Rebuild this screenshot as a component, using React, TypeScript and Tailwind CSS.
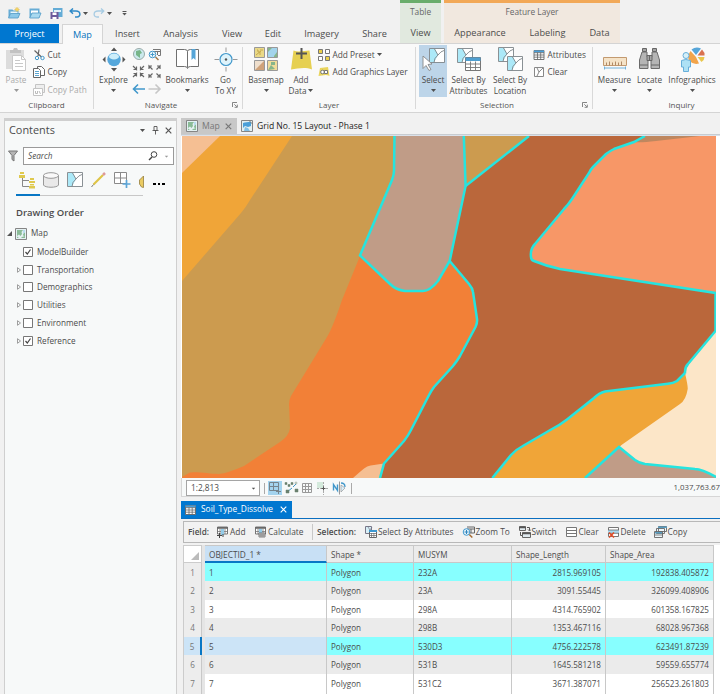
import type { ReactNode } from "react";

function Svg({ w, h, children, className = "" }: { w: number; h: number; children: ReactNode; className?: string }) {
  return (
    <svg width={w} height={h} viewBox={`0 0 ${w} ${h}`} fill="none" className={`block shrink-0 ${className}`}>
      {children}
    </svg>
  );
}

function Caret({ className = "text-[#505050]" }: { className?: string }) {
  return (
    <Svg w={5} h={3} className={className}>
      <path d="M0 0h5L2.500 3z" fill="currentColor" />
    </Svg>
  );
}

function Launcher() {
  return (
    <Svg w={6} h={6}>
      <path d="M.5 5V.5H5M2.3 2.3l2.5 2.5M5.3 2.6v2.7H2.6" stroke="#777" strokeWidth=".9" />
    </Svg>
  );
}

function MapIcon({ blue = false }: { blue?: boolean }) {
  return (
    <Svg w={12} h={12}>
      <path d="M.5.5h11v11H.5z" fill="#e4f1f2" stroke="#858585" />
      {blue ? (
        <>
          <path d="M2 3c2-1 5-1 8-1v4L7 7 4 6 2 8z" fill="#4a9fd8" />
          <path d="M3 11l1-4 3 1 2 3z" fill="#80bfe5" />
          <path d="M8 .5l3.500 3.500" stroke="#777" />
        </>
      ) : (
        <>
          <path d="M2 2h6L6.500 4 7 6 5.500 8 4 6.500 2 8z" fill="#8abb97" />
          <path d="M2 8.500l2 1.500H2zM8 6l2-2v4L8.500 8zM7 9l3-1v2H6z" fill="#8abb97" />
          <path d="M8 2h2v2L8 6z" fill="#b9dcf0" />
        </>
      )}
    </Svg>
  );
}

function Grid({ w = 11, h = 10 }: { w?: number; h?: number }) {
  return (
    <svg width={w} height={h} viewBox="0 0 11 10" fill="none" className="block shrink-0">
      <path d="M.5.5h10v9H.5z" fill="#fff" stroke="#666" strokeWidth=".9" />
      <path d="M.5.5h10v2H.5z" fill="#4a9fd8" />
      <path d="M.5 2.700h10M.5 5h10M.5 7.200h10M4 2.500v7M7.200 2.500v7" stroke="#666" strokeWidth=".8" />
    </svg>
  );
}

function Tool({ kind }: { kind: string }) {
  return (
    <Svg w={13} h={12}>
      {kind === "add" || kind === "calc" ? (
        <>
          <path d="M1.500 1h10v7h-10z" fill="#fff" stroke="#666" strokeWidth=".9" />
          <path d="M1 1h11v1.800H1z" fill="#696969" />
          <path d="M4 3v5M9 3v5M1.500 5.500h10" stroke="#777" strokeWidth=".8" />
          <path d="M5 3h3v6H5z" fill="#94cce9" />
          {kind === "add" ? <path d="M1 9.500h5M3.500 7v5M7 8v3" stroke="#444" /> : <path d="M5 7h6v4H5zM7 7v4M9 7v4M5 9h6" fill="#fff" stroke="#555" strokeWidth=".7" />}
        </>
      ) : kind === "select" ? (
        <>
          <path d="M1.500 .5h6v7h-6z" fill="#d7eff7" stroke="#778" />
          <path d="M4 1l2 3 2-3" stroke="#778" strokeWidth=".7" />
          <path d="M5.500 4.500h7v7h-7z" fill="#fff" stroke="#666" />
          <path d="M5 4h8v2H5z" fill="#3d98d0" />
          <path d="M5 7.500h7M5 9.500h7M7.500 7v4M9.900 7v4" stroke="#666" strokeWidth=".7" />
        </>
      ) : kind === "zoom" ? (
        <>
          <path d="M5 1h7.500v6H8M5 3h7M9 3v4" stroke="#666" />
          <circle cx="4.500" cy="6" r="3.300" fill="#e7f5fb" stroke="#4299cf" />
          <path d="M2.500 6h4M4.500 4v4" stroke="#3185bd" />
          <path d="M7.300 8.500l3 3" stroke="#a66a31" strokeWidth="1.400" />
        </>
      ) : kind === "switch" ? (
        <>
          <path d="M1.500 .5h6v4h-6zM4.500 6.500h8v5h-8z" fill="#e0eaef" stroke="#666" />
          <path d="M1 1.500h7M4 7.500h9" stroke="#555" strokeWidth="1.500" />
          <path d="M9 1.500h2.500v3M10 3.500l1.500 1.500L13 3.500M2.500 6v3.500H4" stroke="#555" />
        </>
      ) : kind === "clear" ? (
        <path d="M1.500 1.500h10v9h-10zM1 4.500h10M1 7.500h10" fill="#fff" stroke="#777" />
      ) : kind === "delete" ? (
        <>
          <path d="M1.500 1.500h10v9h-10z" fill="#fff" stroke="#777" />
          <path d="M1 4h11v3H1z" fill="#a9d8ee" />
          <path d="M1 4h11M1 7.300h11" stroke="#666" strokeWidth=".8" />
          <path d="M2 6.500l5 5M7 6.500l-5 5" stroke="#e04b26" strokeWidth="1.500" />
        </>
      ) : (
        <>
          <path d="M4.500 .5h8v5h-8zM2.500 2.500h8v5h-8zM.5 5.500h8v6h-8z" fill="#eef7fb" stroke="#666" strokeWidth=".9" />
          <path d="M1 6h7v1.500H1zM4 .5h9V2H4z" fill="#5a9dc0" />
          <path d="M1 9h8" stroke="#666" strokeWidth=".8" />
        </>
      )}
    </Svg>
  );
}

function Big({ icon, a, b, caret, width, on, off }: { icon: ReactNode; a: string; b?: string; caret?: boolean; width: string; on?: boolean; off?: boolean }) {
  return (
    <div className={`flex h-[52px] shrink-0 flex-col items-center pt-[1px] whitespace-nowrap ${width} ${on ? "bg-[#bdd5e9]" : ""} ${off ? "text-[#a9a9a9]" : ""}`}>
      <div className="flex h-[26px] items-center justify-center">{icon}</div>
      <div className="mt-[2px] h-[11px] text-[8.2px] leading-[11px]">{a}</div>
      <div className="flex h-[11px] items-center justify-center gap-[2px] text-[8.2px] leading-[11px]">
        {b}
        {caret && <Caret className={off ? "text-[#999]" : "text-[#505050]"} />}
      </div>
    </div>
  );
}

function Group({ title, width, launcher, children }: { title: string; width: string; launcher?: boolean; children: ReactNode }) {
  return (
    <div className={`flex h-[68px] shrink-0 flex-col pt-[1px] ${width}`}>
      <div className="flex h-[54px]">{children}</div>
      <div className="flex h-[12px] items-center text-[8px] leading-[12px] text-[#555]">
        <span className="flex-1 text-center">{title}</span>
        {launcher && <span className="mr-[4px] ml-[4px]"><Launcher /></span>}
      </div>
    </div>
  );
}

function Small({ icon, children, off, caret }: { icon: ReactNode; children: ReactNode; off?: boolean; caret?: boolean }) {
  return (
    <div className={`flex h-[17.500px] items-center gap-[2.500px] text-[8.300px] whitespace-nowrap ${off ? "text-[#a9a9a9]" : ""}`}>
      <span className="flex w-[13px] justify-center">{icon}</span>
      <span>{children}</span>
      {caret && <Caret />}
    </div>
  );
}

const Divider = () => <div className="mt-[3px] h-[62px] w-px shrink-0 bg-[#d9d9d9]" />;

function QuickAccess() {
  return (
    <div className="flex h-[24px] items-center pt-[2px] pl-[8px]">
      <Svg w={13} h={12}>
        <path d="M.5 2.500h4l1 1h5v7H.5z" fill="#67acd5" /><path d="M2.500 4.500h7v3h-7z" fill="#e9f6fb" /><path d="M2.500 6.500h9.500l-2 4.500H.5z" fill="#8cc8e8" stroke="#529bc7" strokeWidth=".8" />
        <path d="M9 0v5M6.500 2.500h5M7.200.700l3.600 3.600M10.800.700L7.200 4.300" stroke="#d9b64a" strokeWidth=".8" /><circle cx="9" cy="2.500" r="1.400" fill="#f4d463" />
      </Svg>
      <Svg w={13} h={12} className="ml-[8px]">
        <path d="M.5 1.500h10v9H.5z" fill="#67acd5" /><path d="M2 3.500h7v3H2z" fill="#fff" /><path d="M3 6h9l-2 5H.7z" fill="#a9d9f0" stroke="#529bc7" strokeWidth=".8" />
      </Svg>
      <Svg w={13} h={13} className="ml-[8px]">
        <path d="M3 1h9.500v9H3z" fill="#64acd6" /><path d="M4 3h7v2H4z" fill="#e2f3fa" /><path d="M.5 5h8v7h-8z" fill="#6c5a9b" /><path d="M2.500 5.500h4v2.500h-4zM2.500 10h4v2h-4z" fill="#fff" />
      </Svg>
      <Svg w={12} h={10} className="ml-[6px]"><path d="M1 3h6c5 0 5 6 1 6H6M4 .5L1.200 3 4 5.700" stroke="#318bc8" strokeWidth="1.500" /></Svg>
      <span className="ml-[2px]"><Caret /></span>
      <Svg w={12} h={10} className="ml-[5px]"><path d="M11 3H5C0 3 0 9 4 9h2M8 .5L10.800 3 8 5.700" stroke="#a8cce3" strokeWidth="1.300" /></Svg>
      <span className="ml-[2px]"><Caret /></span>
      <Svg w={5} h={5} className="ml-[10px]"><path d="M.5.500h4" stroke="#555" /><path d="M.3 2h4.400L2.500 4.500z" fill="#555" /></Svg>
    </div>
  );
}

function Header() {
  return (
    <div className="flex h-[43px] text-[9.200px]">
      <div className="flex w-[400px] flex-col">
        <QuickAccess />
        <div className="flex h-[19px] leading-[20px]">
          <span className="w-[59px] bg-[#0077d0] text-center text-white">Project</span>
          <span className="z-10 ml-[3px] h-[20px] w-[41px] border border-b-0 border-[#d4d4d4] bg-[#f9f9f9] text-center leading-[19px] font-medium text-[#0874bd]">Map</span>
          <span className="w-[49px] text-center">Insert</span>
          <span className="w-[57px] text-center">Analysis</span>
          <span className="w-[46px] text-center">View</span>
          <span className="w-[36px] text-center">Edit</span>
          <span className="w-[61px] text-center">Imagery</span>
          <span className="w-[45px] text-center">Share</span>
        </div>
      </div>
      <div className="flex w-[41px] flex-col border-t-[3px] border-[#69ad6b] bg-[#e1e9df] text-center">
        <span className="h-[21px] text-[8.400px] leading-[18px] text-[#666]">Table</span><span className="leading-[20px]">View</span>
      </div>
      <div className="ml-[3px] flex w-[176px] flex-col border-t-[3px] border-[#f2a857] bg-[#f1e8df] text-center">
        <span className="h-[21px] text-[8.300px] leading-[18px] text-[#666]">Feature Layer</span>
        <div className="flex leading-[20px]"><span className="w-[72px]">Appearance</span><span className="w-[63px]">Labeling</span><span className="w-[41px]">Data</span></div>
      </div>
    </div>
  );
}

function SelectPane() {
  return <><path d="M.5.500h15v14H.5z" fill="#fff" /><path d="M1 1h5l3 6-4 7.500H1z" fill="#ace9f8" /><path d="M.5.500h15v14H.5zM5.500 1l3.500 6q3-4 6-4.500M9 7q-4 3-4 7.500" stroke="#7d8589" strokeWidth=".9" /></>;
}

function Ribbon() {
  return (
    <div className="flex h-[70px] border-y border-[#d4d4d4] bg-[#f9f9f9]">
      <Group title="Clipboard" width="w-[93px]">
        <Big width="w-[32px]" a="Paste" off caret icon={
          <Svg w={22} h={25}><path d="M1 3h18v19H1z" fill="#dcdcdc" /><path d="M5 3h3l1-2h3l1 2h3v3H5z" fill="#c2c2c2" /><path d="M7.500 8.500h9l4 4v11h-13z" fill="#fff" stroke="#c9c9c9" /><path d="M16.500 8.500v4h4M10 13.500h5M10 16.500h8M10 19.500h8" stroke="#c9c9c9" /></Svg>
        } />
        <div className="pt-[1px]">
          <Small icon={<Svg w={12} h={12}><path d="M1.500 1.500l7 6.500M6 .5L5 7" stroke="#666" strokeWidth="1.200" /><circle cx="4" cy="9" r="1.700" stroke="#4298cb" /><circle cx="9.500" cy="9" r="1.700" stroke="#4298cb" /></Svg>}>Cut</Small>
          <Small icon={<Svg w={12} h={12}><path d="M4.500 .5h4l3 3v6h-7z" fill="#fff" stroke="#666" /><path d="M.5 2.500h5l2 2v7h-7z" fill="#fff" stroke="#666" /><path d="M2 5.500h4M2 7.500h4M2 9.500h4" stroke="#5ba5d0" /></Svg>}>Copy</Small>
          <Small off icon={<Svg w={12} h={12}><path d="M2.500 .5h9v8h-9z" fill="#eee" stroke="#c4c4c4" /><path d="M.5 4.500h9v7h-9z" fill="#fff" stroke="#c4c4c4" /><path d="M2.500 7v2.500h2V7M6 7l1.500 3" stroke="#bbb" /></Svg>}>Copy Path</Small>
        </div>
      </Group>
      <Divider />
      <Group title="Navigate" width="w-[148px]" launcher>
        <div className="w-px shrink-0" />
        <Big width="w-[37px]" a="Explore" caret icon={
          <Svg w={24} h={25}><circle cx="12" cy="12.500" r="6.700" fill="#55a7db" /><ellipse cx="12" cy="9.500" rx="5" ry="3" fill="#cdeefa" /><path d="M9 4l3-3.500L15 4zM9 21l3 3.500 3-3.500zM3.500 9.500L.5 12.500l3 3zM20.500 9.500l3 3-3 3z" fill="#555" /></Svg>
        } />
        <div className="w-[32px] pt-[3px]">
          <Svg w={31} h={47}>
            <circle cx="7" cy="6" r="5.500" fill="#cbe9ed" stroke="#99aaa9" /><path d="M4 3l4-1 2 3-2 1v4L4 7z" fill="#77b589" />
            <path d="M21 1.500h7.500v6H26M21 3.500h7M25.500 3v4" stroke="#777" /><circle cx="20.500" cy="6.500" r="3.300" fill="#eef8fc" stroke="#4298cb" /><path d="M18.500 6.500h4M20.500 4.500v4" stroke="#4298cb" /><path d="M23.500 9l3 3" stroke="#a1794e" strokeWidth="1.500" />
            <path d="M1 18l3.500 3.500v-3M4.500 21.500h-3M12 18l-3.500 3.500v-3M8.500 21.500h3M1 29l3.500-3.500v3M4.500 25.500h-3M12 29l-3.500-3.500v3M8.500 25.500h3" stroke="#666" strokeWidth="1.200" />
            <path d="M20.500 21.500L17 18v3M17 18h3M24.500 21.500L28 18v3M28 18h-3M20.500 25.500L17 29v-3M17 29h3M24.500 25.500L28 29v-3M28 29h-3" stroke="#666" strokeWidth="1.200" />
            <path d="M13 41H2M6 36.500L1.500 41 6 45.500" stroke="#4298cb" strokeWidth="1.600" /><path d="M16.500 41h11M23.500 36.500L28 41l-4.500 4.500" stroke="#c7c7c7" strokeWidth="1.600" />
          </Svg>
        </div>
        <Big width="w-[46px]" a="Bookmarks" caret icon={
          <Svg w={25} h={24}><path d="M1.500 2.500h8q3 0 3 2 0-2 3-2h8v17h-8q-3 0-3 2 0-2-3-2h-8z" fill="#fff" stroke="#707070" /><path d="M12.500 4.500v16" stroke="#707070" /><path d="M16.500 2h4v11l-2-2-2 2z" fill="#55a5d8" /></Svg>
        } />
        <Big width="w-[31px]" a="Go" b="To XY" icon={
          <Svg w={24} h={25}><circle cx="12" cy="12.500" r="6" fill="#def3fb" stroke="#4298cb" strokeWidth="1.200" /><circle cx="12" cy="12.500" r="1.200" fill="#555" /><path d="M12 .5v4.500M12 20v4.500M.5 12.500H5M19 12.500h4.500" stroke="#999" /></Svg>
        } />
      </Group>
      <Divider />
      <Group title="Layer" width="w-[172px]">
        <Big width="w-[46px]" a="Basemap" caret icon={
          <Svg w={24} h={24}><path d="M.5.500h10v10H.5z" fill="#ead987" stroke="#999" /><path d="M13.500.500h10v10h-10z" fill="#a3d4ec" stroke="#999" /><path d="M.5 13.500h10v10H.5z" fill="#efdfcd" stroke="#999" /><path d="M1 23l9-9v9z" fill="#cfa27a" /><path d="M13.500 13.500h10v10h-10z" fill="#f0dc9b" stroke="#999" /><path d="M14 1h4l-4 4zM20 9l3-4v5h-3zM14 23l3-5 4 4zM17 15h4v3h-4z" fill="#86b58b" /><path d="M3 3h1v2h2v3M6 3h3M2 8l5-4" stroke="#c5a94e" /></Svg>
        } />
        <Big width="w-[24px]" a="Add" b="Data" caret icon={
          <Svg w={23} h={25}><path d="M3.500 3.500c5 2 11 0 16 0l2.500 19c-7-3-14-1-21 0z" fill="#e6d052" /><path d="M11.500 1v11M6 6.500h11" stroke="#555" strokeWidth="2" /></Svg>
        } />
        <div className="pt-[1px] pl-[4px]">
          <Small caret icon={<Svg w={12} h={12}><path d="M.5.500h4v4h-4z" fill="#ebcf48" stroke="#777" /><path d="M7.500.500h4v4h-4zM.5 7.500h4v4h-4z" fill="#fff" stroke="#777" /><path d="M7.500 7.500h4v4h-4z" fill="#ebcf48" stroke="#777" /></Svg>}>Add Preset</Small>
          <Small icon={<Svg w={12} h={12}><path d="M2 2l8-1 1.500 9c-4-2-7 0-11 0z" fill="#e9d45d" /><circle cx="4.500" cy="6" r="1.800" fill="#fff" stroke="#777" /><path d="M6.500 4.500h3v3h-3z" fill="#fff" stroke="#777" /></Svg>}>Add Graphics Layer</Small>
        </div>
      </Group>
      <Divider />
      <Group title="Selection" width="w-[176px]" launcher>
        <div className="w-[3px] shrink-0" />
        <Big width="w-[28px]" a="Select" caret on icon={
          <Svg w={23} h={25}><g transform="translate(7 1)"><SelectPane /></g><path d="M1 9l9 8-4 .5 3 5-2 1-3-5-3 3z" fill="#fff" stroke="#888" strokeWidth=".9" /></Svg>
        } />
        <Big width="w-[43px]" a="Select By" b="Attributes" icon={
          <Svg w={26} h={25}><g transform="translate(1 1)"><SelectPane /></g><g transform="translate(9.500 10.500)"><path d="M0 0h15v13H0z" fill="#fff" stroke="#777" /><path d="M0 0h15v3.500H0z" fill="#4f9fd0" /><path d="M0 6.500h15M0 10h15M5 4v9M10 4v9" stroke="#777" strokeWidth=".9" /></g></Svg>
        } />
        <Big width="w-[40px]" a="Select By" b="Location" icon={
          <Svg w={25} h={25}><SelectPane /><g transform="translate(9 9)"><SelectPane /></g></Svg>
        } />
        <div className="pt-[1px] pl-[2px]">
          <Small icon={<Grid w={12} h={10} />}>Attributes</Small>
          <Small icon={<Svg w={10} h={10}><path d="M.5.500h9v9h-9zM3 1l2 4 4-4M5 5L3 9" fill="#fff" stroke="#888" /></Svg>}>Clear</Small>
        </div>
      </Group>
      <Divider />
      <Group title="Inquiry" width="w-[177px]">
        <Big width="w-[43px]" a="Measure" caret icon={
          <Svg w={24} h={13} className="mt-[8px]"><path d="M.5.500h23v8H.5z" fill="#f5e3c8" stroke="#c39a70" /><path d="M3.500 8.500v-3M6.500 8.500v-4M9.500 8.500v-3M12.500 8.500v-4M15.500 8.500v-3M18.500 8.500v-4" stroke="#b08a66" /><path d="M1 11h22M1.500 9.500v3M22.500 9.500v3" stroke="#73b2da" /></Svg>
        } />
        <Big width="w-[27px]" a="Locate" caret icon={
          <Svg w={23} h={24}><path d="M4 5h5v4l1 3v9.500H1.500V13zM14 5h5l2.500 8v8.500H13V12l1-3z" fill="#b5b5b5" stroke="#6b6b6b" /><path d="M4.500 1.500h4v3h-4zM14.500 1.500h4v3h-4zM9 8.500h5v5H9zM1.500 18h8.500M13 18h8.500M11.500 9v4" fill="#a5a5a5" stroke="#666" /></Svg>
        } />
        <Big width="w-[58px]" a="Infographics" caret icon={
          <Svg w={25} h={25}><path d="M16 8L11.500 2.500Q16-1 21 1.500z" fill="#57a6d9" /><path d="M17.500 8.500L22 2.500q3 3 2.500 6z" fill="#d9714f" /><path d="M17.500 10h7q0 3-3 5z" fill="#e9c74c" /><path d="M16 10L10.500 4q-4 6-1 10 4 4 9.500 2.500z" fill="#f2a44b" /><circle cx="6" cy="8.500" r="3" fill="#d6f0f8" stroke="#67aeda" /><path d="M1.500 13.500q4-2 9 0V20h-2v4.500h-5V20h-2z" fill="#aee1f5" stroke="#67aeda" /></Svg>
        } />
      </Group>
    </div>
  );
}

function Check({ on }: { on?: boolean }) {
  return <Svg w={10} h={10}><path d="M.5.500h9v9h-9z" fill="#fff" stroke="#777" />{on && <path d="M2.500 5l1.800 2L7.500 2.500" stroke="#444" strokeWidth="1.200" />}</Svg>;
}

function Contents() {
  const layers: [string, boolean][] = [["ModelBuilder", true], ["Transportation", false], ["Demographics", false], ["Utilities", false], ["Environment", false], ["Reference", true]];
  return (
    <div className="ml-[4px] flex w-[173px] shrink-0 flex-col border-x border-t-[3px] border-[#cfcfcf] bg-[#f7f9f9]">
      <div className="flex h-[18px] items-center pl-[4px]">
        <span className="text-[10.900px]">Contents</span>
        <span className="ml-auto"><Caret /></span>
        <Svg w={7} h={9} className="ml-[7px]"><path d="M2 .5h3v4H2zM.5 4.500h6M3.500 5v3.500" stroke="#555" strokeWidth=".9" /></Svg>
        <Svg w={7} h={7} className="mr-[4px] ml-[6px]"><path d="M.7.700l5.600 5.600M6.300.700L.7 6.300" stroke="#555" strokeWidth="1.200" /></Svg>
      </div>
      <div className="mt-[8px] flex h-[18px] items-center pl-[2px]">
        <Svg w={12} h={12}><path d="M1.500 1h9L7 5.500V11L5 9.500v-4z" fill="#b5b5b5" stroke="#777" /></Svg>
        <div className="ml-[4px] flex h-[18px] w-[151px] items-center border border-[#9a9a9a] bg-white px-[4px]">
          <span className="text-[8.200px] italic">Search</span>
          <Svg w={10} h={10} className="ml-auto"><circle cx="6" cy="3.500" r="2.800" stroke="#444" /><path d="M4 6L1 9" stroke="#444" strokeWidth="1.400" /></Svg>
          <span className="ml-[6px] scale-75"><Caret className="text-[#999]" /></span>
        </div>
      </div>
      <div className="mt-[7px] flex h-[22px] items-start pl-[14px]">
        <Svg w={17} h={17}><path d="M3.500 5v9.500H10M3.500 8.500H10" stroke="#888" /><path d="M1 0h4v2H1zM0 3h6v3H0zM11 6h4v2h-4zM10 9h6v2h-6zM11 12h4v1.500h-4zM10 14h6v2.500h-6z" fill="#dfc94e" /></Svg>
        <Svg w={16} h={16} className="ml-[7px]"><path d="M.5 3.500v9.500c1 3 14 3 15 0V3.500z" fill="#e9e9e9" stroke="#999" /><ellipse cx="8" cy="3.500" rx="7.500" ry="2.800" fill="#f9f9f9" stroke="#999" /></Svg>
        <Svg w={16} h={16} className="ml-[8px]"><SelectPane /></Svg>
        <Svg w={16} h={16} className="ml-[8px]"><path d="M2.500 12.500L12 3" stroke="#dec447" strokeWidth="2.200" /><path d="M12 3l2-2" stroke="#dd9999" strokeWidth="2.500" /><path d="M.5 15l2-2.500" stroke="#777" /></Svg>
        <Svg w={18} h={17} className="ml-[7px]"><path d="M.5.500h12v11H.5zM.5 6h12M6.500.500v11" fill="#fff" stroke="#8a8a8a" /><path d="M8.500 12h8M12.500 8v8" stroke="#5ba5d8" strokeWidth="1.700" /></Svg>
        <Svg w={5} h={17} className="ml-[7px]"><path d="M.5 8L4.500 4v11.500l-2-.5-2-3z" fill="#eacb62" stroke="#967f3f" strokeWidth=".8" /></Svg>
        <span className="mt-[11px] ml-[9px] flex gap-[2px]"><i className="h-[2px] w-[3px] bg-black"/><i className="h-[2px] w-[2px] bg-black"/><i className="h-[2px] w-[3px] bg-black"/></span>
      </div>
      <div className="ml-[11px] flex h-[3px] w-[127px]"><i className="h-[2px] w-[24px] bg-[#0877c5]" /><i className="mt-px h-px flex-1 bg-[#c8c8c8]" /></div>
      <div className="mt-[7px] h-[17px] pl-[11px] text-[9.500px] leading-[17px] font-semibold">Drawing Order</div>
      <div className="mt-[3px] flex h-[19px] items-center pl-[2px] text-[8.200px]">
        <Svg w={6} h={5}><path d="M5 0v5H0z" fill="#555" /></Svg><span className="mr-[4px] ml-[2px]"><MapIcon /></span>Map
      </div>
      {layers.map(([name, on], i) => (
        <div key={name} className="flex h-[17.800px] items-center pl-[12px] text-[8.200px]">
          <span className="w-[6px]">{i > 0 && <Svg w={4} h={6}><path d="M.5.700L3.500 3 .5 5.300z" stroke="#888" strokeWidth=".8" /></Svg>}</span>
          <Check on={on} /><span className="ml-[4px]">{name}</span>
        </div>
      ))}
    </div>
  );
}

// Boundaries shared by the filled soil units and the selection outline.
const grayUnit = "M394.500 136L394 171Q394 175 392 180L360 255.500L390 284Q396 290 405 291H423Q430 291 438 281L449.700 261L465.600 186L463.800 136";
const westEdge = "M449.700 261L469 284Q472.500 288 473 292L477 319Q477.500 323 475.500 327L460 356Q457 361 453 366L434 387Q431 391 428 397L411 430Q408 436 404 441L384 463.500L380 478";
const southEdge = "M492.300 478L511 455Q516 449.500 522 446.500L552 429Q560 425 567 419.500L594 398Q599 393 605 391.500L668 383.800Q673 383.500 677 381L685 373";

function SoilMap() {
  return (
    <svg width="534" height="342" viewBox="182 136 534 342" className="block shrink-0">
      <path d="M182 136h534v342H182z" fill="#cc9b4f" />
      <path d="M182 136h110l-42 64q-4 7-9 13l-59 68z" fill="#f0a538" />
      <path d="M182 136h38l-38 37z" fill="#f5bf93" />
      <path d="M360 256L342 300q-9 27-15 37L291 396q-2 4-2 8l1 24q-1 8-10 14L244 466q-16 7-25 8c-10 0-24-3-30-1l-7 4v1h210L500 300 450 261 420 200z" fill="#f28037" />
      <path d="M353 478l8-7q6-6 13-6l10-1.500-4 14.500z" fill="#f5bf93" />
      <path d={`${westEdge}H716V136H463.800L465.600 186z`} fill="#ba673b" />
      <path d="M463.800 136H529l-63.400 50z" fill="#cc9b4f" />
      <path d={`${grayUnit}z`} fill="#c09c87" />
      <path d="M645 136l-11 6-20 7q-4 2-8 5l-13 13q-2 2-4 6l-17 26q-4 6-8 10l-29 35q-5 5-4 13 0 3 3 4 12 5 24 8l158 23.500V136z" fill="#f79767" />
      <path d="M645 136h55l-44 5q-16 2-22 1z" fill="#be875f" />
      <path d="M716 331l-28 34q-3 4-3 8l-66 74-34 31h131z" fill="#fce6c8" />
      <path d={`${southEdge}Q688 386 687.700 389Q686 400 680 404L619 446.700L585.700 478z`} fill="#f0a538" />
      <path d="M585 478l34-31 16 13q4 3 10 4l50 5q7 0 21 8v1z" fill="#c09c87" />
      <g fill="none" stroke="#26e4df" strokeWidth="2.500">
        <path d={grayUnit} />
        <path d="M529 136l-63.400 50" />
        <path d={westEdge} />
        <path d={southEdge} />
        <path d="M645 136l-11 6-20 7q-4 2-8 5l-13 13q-2 2-4 6l-17 26q-4 6-8 10l-29 35q-5 5-4 13 0 3 3 4 12 5 26 8L715.500 293v38L688 364q-3 3-3 8v1.500" />
        <path d="M585 478l34-31 16 13q4 3 10 4l50 5q7 0 21 8" />
      </g>
    </svg>
  );
}

function MapPane() {
  return (
    <>
      <div className="flex h-[16px] text-[8.600px] leading-[17px] whitespace-nowrap">
        <div className="flex w-[56px] items-center bg-[#c8c8c8] pl-[5px] text-[#777]"><MapIcon /><span className="ml-[4px]">Map</span><span className="ml-[5px]"><Svg w={7} h={7}><path d="M.7.700l5.500 5.500M6.200.700L.7 6.200" stroke="#777" strokeWidth="1.200" /></Svg></span></div>
        <div className="ml-[4px] flex items-center"><MapIcon blue /><span className="ml-[4px] text-[8.570px] text-[#222]">Grid No. 15 Layout - Phase 1</span></div>
      </div>
      <div className="h-[2px] border-t border-[#c8ccd0] bg-[#dbe1ea]" />
      <div className="flex bg-white pl-px"><SoilMap /></div>
      <div className="flex h-[19px] items-center border-b border-l border-[#d6d6d6] bg-[#f7f9f9] pt-[2px] pl-[4px] text-[8.300px]">
        <div className="flex h-[16px] w-[74px] items-center border border-[#a5a5a5] bg-white pr-[3px] pl-[4px]"><span>1:2,813</span><span className="ml-auto scale-75"><Caret /></span></div>
        <Svg w={96} h={16} className="ml-[3px]">
          <path d="M1.500 3v11M88.500 3v11" stroke="#aaa" /><path d="M5 1h14v14H5z" fill="#a4d4ef" />
          <path d="M6.500 2.500h9v8h-9zM6.500 6.500h9M10.500 2.500v8M13 11.500h5M15.500 9v5" stroke="#75848d" />
          <path d="M24 12l5-4M30 7l3-3" stroke="#4298cb" /><path d="M22 2.500h2v2h-2zM25 4.500h2v2h-2zM28 2.500h2v2h-2zM31.500 3h3M33 1.500v3M32 9h3v3h-3zM23 10h3v3h-3z" fill="#69806f" stroke="#69806f" strokeWidth=".5" />
          <path d="M39.500 3.500h9v9h-9zM42.500 3.500v9M45.500 3.500v9M39.500 6.500h9M39.500 9.500h9" stroke="#999" />
          <path d="M54 2h6v6h-6z" fill="#d4eadc" /><path d="M54 8.500h12M60.500 2v13" stroke="#aaa" strokeDasharray="2 1" /><path d="M58.500 8.500h4M60.500 6.500v4" stroke="#555" />
          <path d="M70.500 10.500v-6l4 6v-6" stroke="#4298cb" strokeWidth="1.400" /><path d="M76.500 1.500v13" stroke="#999" /><path d="M78 12V5l4 3z" fill="#d9effa" stroke="#999" strokeWidth=".7" /><path d="M78 3q4 0 4 4" stroke="#4298cb" strokeWidth="1.300" />
        </Svg>
        <span className="ml-auto text-[7.850px] whitespace-nowrap">1,037,763.67</span>
      </div>
    </>
  );
}

const rows = [
  ["1", "232A", "2815.969105", "192838.405872"],
  ["2", "23A", "3091.55445", "326099.408906"],
  ["3", "298A", "4314.765902", "601358.167825"],
  ["4", "298B", "1353.467116", "68028.967368"],
  ["5", "530D3", "4756.222578", "623491.87239"],
  ["6", "531B", "1645.581218", "59559.655774"],
  ["7", "531C2", "3671.387071", "256523.261803"],
];

function AttributeTable() {
  const tools: [string, string, string][] = [["select", "Select By Attributes", "w-[97.500px]"], ["zoom", "Zoom To", "w-[56px]"], ["switch", "Switch", "w-[47px]"], ["clear", "Clear", "w-[42px]"], ["delete", "Delete", "w-[47px]"], ["copy", "Copy", "w-[40px]"]];
  return (
    <>
      <div className="mt-[4px] h-[18px] border-b border-[#0b6fc0]">
        <div className="flex h-[17px] w-[111px] items-center bg-[#0077d0] pl-[4px] text-[8.400px] whitespace-nowrap text-white"><Grid /><span className="ml-[5px]">Soil_Type_Dissolve</span><Svg w={7} h={7} className="ml-[7px]"><path d="M.7.700l5.600 5.600M6.300.700L.7 6.300" stroke="#fff" strokeWidth="1.100" /></Svg></div>
      </div>
      <div className="mt-[2px] ml-[2px] flex h-[22px] items-center border border-r-0 border-[#b8b8b8] bg-[#f2f2f2] pl-[4px] text-[8.350px] whitespace-nowrap">
        <b className="w-[28px] text-[8.200px] font-semibold">Field:</b>
        <span className="flex w-[38px] items-center gap-[1px]"><Tool kind="add" />Add</span><span className="flex w-[58px] items-center gap-[1px]"><Tool kind="calc" />Calculate</span>
        <i className="h-[16px] w-px bg-[#c8c8c8]" /><b className="ml-[4px] w-[47px] font-semibold">Selection:</b>
        {tools.map(([kind, name, width]) => <span key={kind} className={`flex items-center gap-[1px] ${width}`}><Tool kind={kind} />{name}</span>)}
      </div>
      <div className="mt-[2px] ml-[2px] flex-1 overflow-hidden border-l border-[#ccc] bg-white text-[8.100px]">
        <div className="grid w-[530px] grid-cols-[18px_3px_122px_87px_98px_94px_108px]">
          <div className="flex items-end justify-end border border-l-0 border-[#ccc] bg-white p-[2px]"><Svg w={8} h={8}><path d="M8 0v8H0z" fill="#bbb" /></Svg></div>
          <div className="bg-[#e5e5e5]" />
          {["OBJECTID_1 *", "Shape *", "MUSYM", "Shape_Length", "Shape_Area"].map((name, i) => <div key={name} className={`h-[18px] border-t border-r border-b border-[#c8c8c8] pl-[4px] leading-[17px] ${i === 0 ? "border-b-2 border-b-[#0877c5] bg-[#c8e0f5] text-[8.300px]" : "bg-[#ebebeb]"}`}>{name}</div>)}
        </div>
        {rows.map(([id, musym, length, area], i) => {
          const bg = id === "1" || id === "5" ? "bg-[#87ffff]" : i % 2 || id === "6" ? "bg-[#ebebeb]" : "bg-white";
          return (
            <div key={id} className="grid h-[18.450px] w-[530px] grid-cols-[18px_3px_122px_87px_98px_94px_108px] leading-[20px] [&>div]:border-b [&>div]:border-[#c8c8c8]">
              <div className={`text-center text-[#777] ${id === "5" ? "border-r-2 border-r-[#0877c5]! bg-[#cce4f7]" : "border-r bg-[#ededed]"}`}>{id}</div><div className="bg-[#e5e5e5]" />
              <div className={`border-r pl-[4px] ${id === "5" ? "bg-[#cce4f7]" : bg}`}>{id}</div>
              <div className={`border-r pl-[4px] ${bg}`}>Polygon</div><div className={`border-r pl-[4px] ${bg}`}>{musym}</div>
              <div className={`border-r pr-[4px] text-right ${bg}`}>{length}</div><div className={`border-r pr-[4px] text-right ${bg}`}>{area}</div>
            </div>
          );
        })}
      </div>
    </>
  );
}

export default function App() {
  return (
    <div className="flex h-[694px] w-[720px] flex-col overflow-hidden bg-[#f1f1f1] font-['Open_Sans','Noto_Sans',sans-serif] text-[#4c4c4c]">
      <Header />
      <Ribbon />
      <div className="flex flex-1 pt-[5px]">
        <Contents />
        <main className="ml-[4px] flex min-w-0 flex-1 flex-col"><MapPane /><AttributeTable /></main>
      </div>
    </div>
  );
}
